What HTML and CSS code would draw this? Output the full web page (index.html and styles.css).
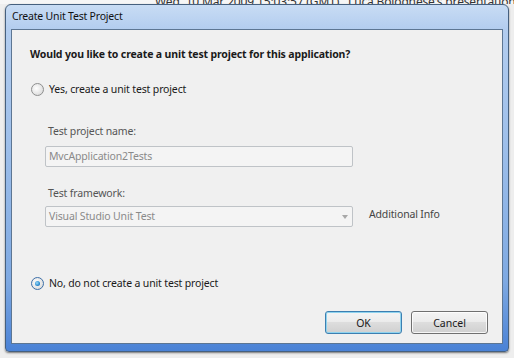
FILE: index.html
```html
<!DOCTYPE html>
<html lang="en">
<head>
    <meta charset="UTF-8">
    <title>Create Unit Test Project</title>
    <link rel="stylesheet" href="styles.css">
</head>
<body>

    <!-- Page behind the dialog -->
    <div class="backdrop">Wed, 10 Mar 2009 15:03:57 (GMT) &nbsp; Luca Bolognese's presentation on</div>

    <!-- Dialog window -->
    <div class="window">
        <div class="titlebar">Create Unit Test Project</div>

        <div class="client">
            <div class="question">Would you like to create a unit test project for this application?</div>

            <label class="radio-row first">
                <span class="radio"></span>
                Yes, create a unit test project
            </label>

            <div class="fields">
                <div class="field-label name-label">Test project name:</div>
                <div class="textbox">MvcApplication2Tests</div>

                <div class="field-label framework-label">Test framework:</div>
                <div class="select-row">
                    <div class="textbox select">
                        Visual Studio Unit Test
                        <span class="arrow"></span>
                    </div>
                    <span class="info">Additional Info</span>
                </div>
            </div>

            <label class="radio-row second">
                <span class="radio checked"></span>
                No, do not create a unit test project
            </label>

            <div class="buttons">
                <button class="button default">OK</button>
                <button class="button">Cancel</button>
            </div>
        </div>
    </div>

</body>
</html>
```

FILE: styles.css
```css
body {
    margin: 0;
    width: 514px;
    height: 358px;
    overflow: hidden;
    background: #eeeeee;
    font-family: 'Noto Sans', sans-serif;
    font-size: 10.5px;
    letter-spacing: -0.15px;
    color: #1a1a1a;
}
/* Page behind */
.backdrop {
    height: 4px;
    overflow: hidden;
    padding-left: 155px;
    font-size: 12px;
    line-height: 4px;
    color: #333;
    white-space: nowrap;
    background: #f6f6f6;
}
/* Window frame */
.window {
    width: 504px;
    height: 348px;
    margin-left: 5px;
    box-sizing: border-box;
    border: 1px solid #46607e;
    border-radius: 6px 6px 4px 4px;
    padding: 0 5px 7px 5px;
    background: linear-gradient(to bottom, #c8dcf4 0, #b3cdef 24px, #9ebfea 40%, #7ea9e2 80%, #4a82d6 100%);
    box-shadow: 0 1px 2px rgba(0, 0, 0, 0.5);
    display: flex;
    flex-direction: column;
}
.titlebar {
    height: 24px;
    line-height: 22px;
    padding-left: 1px;
    font-size: 10.5px;
    letter-spacing: -0.2px;
    color: #111;
}
.client {
    flex: 1;
    background: #f0f0f0;
    border: 1px solid #5d7693;
    padding: 15px 14px 0 18px;
    display: flex;
    flex-direction: column;
}
.question {
    font-weight: 700;
    line-height: 18px;
}
/* Radio buttons */
.radio-row {
    display: flex;
    align-items: center;
    gap: 5px;
    line-height: 18px;
    padding-left: 1px;
}
.radio-row.first {
    margin-top: 17px;
}
.radio-row.second {
    margin-top: 47px;
}
.radio {
    width: 11px;
    height: 11px;
    border-radius: 50%;
    border: 1px solid #8e8f8f;
    background: radial-gradient(circle at 40% 40%, #ffffff 0, #e4e4e4 60%, #cfcfcf 100%);
    display: flex;
    align-items: center;
    justify-content: center;
}
.radio.checked {
    border-color: #3d6fa8;
}
.radio.checked::after {
    content: "";
    width: 5px;
    height: 5px;
    border-radius: 50%;
    background: radial-gradient(circle at 40% 40%, #9fdcf8 0, #2a8bd0 60%, #1a4f96 100%);
}
/* Project fields */
.fields {
    margin-left: 15px;
    display: flex;
    flex-direction: column;
}
.field-label {
    line-height: 16px;
    color: #555;
    padding-left: 3px;
}
.name-label {
    margin-top: 25px;
    margin-bottom: 7px;
}
.framework-label {
    margin-top: 18px;
    margin-bottom: 5px;
}
.textbox {
    width: 308px;
    height: 21px;
    box-sizing: border-box;
    border: 1px solid #bfc3c7;
    border-radius: 2px;
    background: #f4f4f4;
    color: #8a8a8a;
    padding-left: 3px;
    line-height: 19px;
}
.select-row {
    display: flex;
    align-items: center;
    gap: 16px;
}
.select {
    position: relative;
}
.arrow {
    position: absolute;
    right: 4px;
    top: 8px;
    border-left: 3px solid transparent;
    border-right: 3px solid transparent;
    border-top: 4px solid #a8a8a8;
}
.info {
    color: #444;
    margin-top: -5px;
}
/* Dialog buttons */
.buttons {
    margin-top: 19px;
    display: flex;
    justify-content: flex-end;
    gap: 9px;
}
.button {
    width: 77px;
    height: 23px;
    font-family: 'Noto Sans', sans-serif;
    font-size: 10.5px;
    color: #1a1a1a;
    border: 1px solid #707070;
    border-radius: 3px;
    background: linear-gradient(to bottom, #f4f4f4 0, #ececec 45%, #dddddd 50%, #d0d0d0 100%);
    box-shadow: inset 0 0 0 1px rgba(255, 255, 255, 0.8);
    padding: 0;
}
.button.default {
    border-color: #3c7fb1;
    box-shadow: inset 0 0 0 1px #8fd3ee;
}
```
